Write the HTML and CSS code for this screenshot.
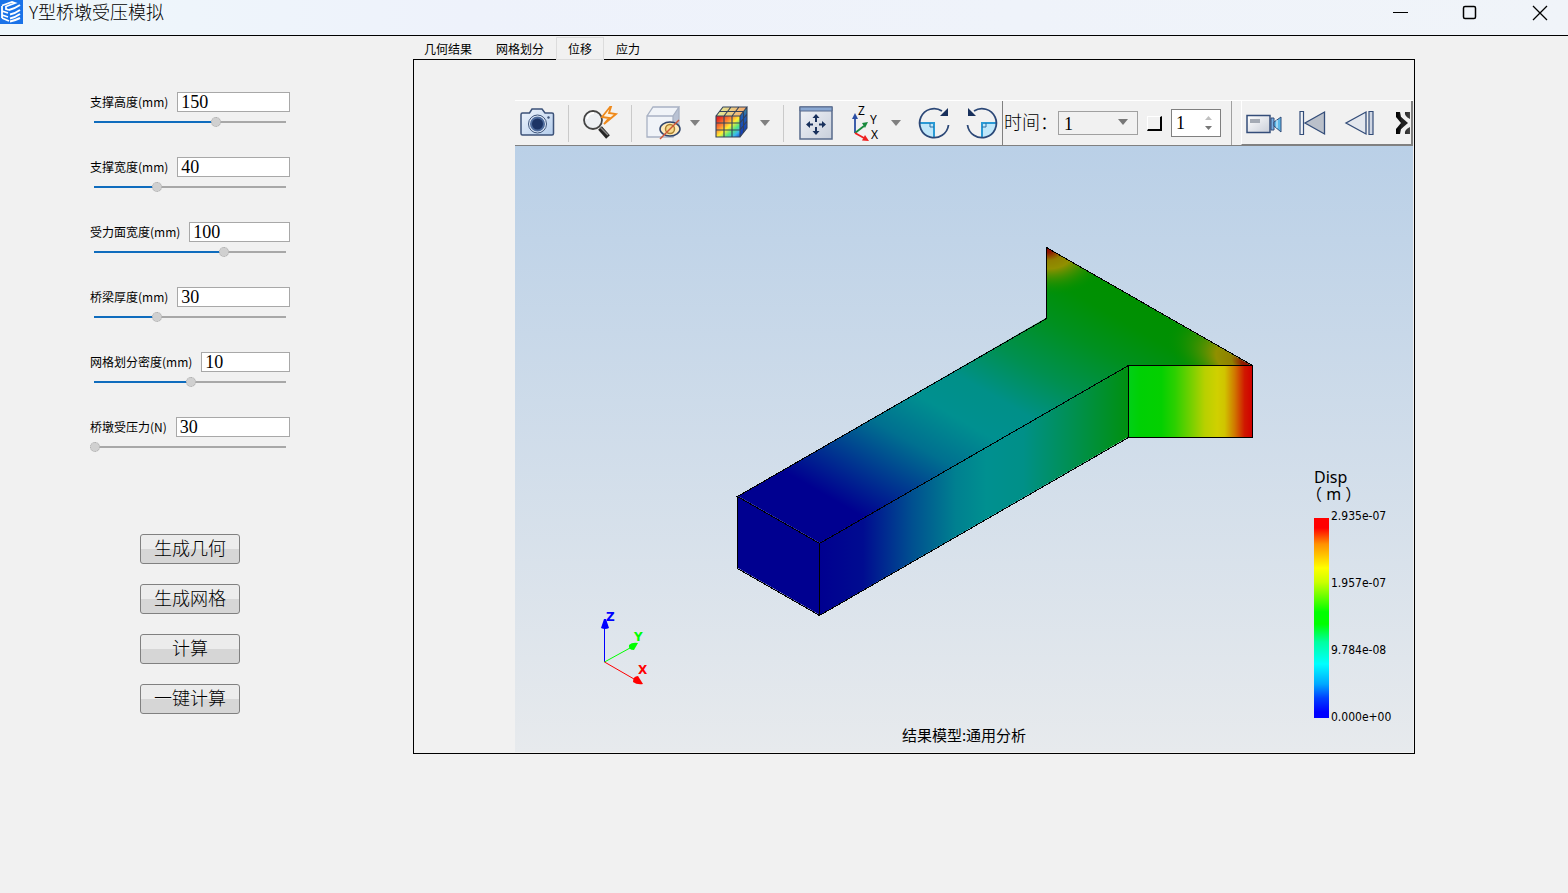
FILE: index.html
```html
<!DOCTYPE html>
<html lang="zh-CN">
<head>
<meta charset="utf-8">
<title>Y型桥墩受压模拟</title>
<link rel="stylesheet" href="styles.css">
</head>
<body>
<header class="titlebar">
  <svg class="app-logo" viewBox="0 0 23 24" aria-hidden="true">
    <rect width="23" height="24" fill="#1a73e8"/>
    <path d="M2 5.500 12 2l3 1-9 3.500v2.500l3 1M2 6v12M2 11l6 2M2 15l6 2M2 18l7 3" stroke="#fff" stroke-width="1.800" fill="none"/>
    <path d="M9 10q5-1 11-5M10 14.500q5-1 10-4.500M10 18.500q5-1 10-4.500M10 21.500q5-1 10-3.500" stroke="#fff" stroke-width="2" fill="none"/>
  </svg>
  <h1 class="app-title">Y型桥墩受压模拟</h1>
  <div class="window-controls">
    <button type="button" aria-label="最小化"><svg viewBox="0 0 16 16"><path d="M1 7.500h15" /></svg></button>
    <button type="button" aria-label="最大化"><svg viewBox="0 0 16 16"><rect class="thick" x="1.500" y="1.500" width="12" height="12" rx="1.500"/></svg></button>
    <button type="button" aria-label="关闭"><svg viewBox="0 0 16 16"><path class="cross" d="M1 1l14 14M15 1 1 15"/></svg></button>
  </div>
</header>

<main class="workspace">
  <form class="params">
    <div class="param">
      <div class="param-row"><label for="p1">支撑高度(mm)</label><input id="p1" class="param-value" type="text" value="150"></div>
      <input class="slider" type="range" aria-label="支撑高度" min="0" max="1000" value="637" style="--fill:63.7%">
    </div>
    <div class="param">
      <div class="param-row"><label for="p2">支撑宽度(mm)</label><input id="p2" class="param-value" type="text" value="40"></div>
      <input class="slider" type="range" aria-label="支撑宽度" min="0" max="1000" value="326" style="--fill:32.6%">
    </div>
    <div class="param">
      <div class="param-row"><label for="p3">受力面宽度(mm)</label><input id="p3" class="param-value" type="text" value="100"></div>
      <input class="slider" type="range" aria-label="受力面宽度" min="0" max="1000" value="679" style="--fill:67.9%">
    </div>
    <div class="param">
      <div class="param-row"><label for="p4">桥梁厚度(mm)</label><input id="p4" class="param-value" type="text" value="30"></div>
      <input class="slider" type="range" aria-label="桥梁厚度" min="0" max="1000" value="326" style="--fill:32.6%">
    </div>
    <div class="param">
      <div class="param-row"><label for="p5">网格划分密度(mm)</label><input id="p5" class="param-value" type="text" value="10"></div>
      <input class="slider" type="range" aria-label="网格划分密度" min="0" max="1000" value="505" style="--fill:50.5%">
    </div>
    <div class="param">
      <div class="param-row"><label for="p6">桥墩受压力(N)</label><input id="p6" class="param-value" type="text" value="30"></div>
      <input class="slider" type="range" aria-label="桥墩受压力" min="0" max="1000" value="0" style="--fill:0%">
    </div>
    <div class="actions">
      <button type="button">生成几何</button>
      <button type="button">生成网格</button>
      <button type="button">计算</button>
      <button type="button">一键计算</button>
    </div>
  </form>

  <section class="results">
    <div class="tabs" role="tablist">
      <button type="button" role="tab">几何结果</button>
      <button type="button" role="tab">网格划分</button>
      <button type="button" role="tab" class="selected" aria-selected="true">位移</button>
      <button type="button" role="tab">应力</button>
    </div>
    <div class="frame">
      <div class="viewer">
        <div class="toolbar">
          <div class="tools">
            <button type="button" class="tool" aria-label="截图"><svg viewBox="0 0 36 36">
              <defs><linearGradient id="cam" x2="1" y2="1"><stop stop-color="#f0f5fc"/><stop offset="1" stop-color="#b4cdec"/></linearGradient></defs>
              <path d="M3.500 8h7l2.500-4h10l3 4h7q1.500 0 1.500 1.500v19q0 1.500-1.500 1.500h-29.500q-1.500 0-1.500-1.500v-19Q2 8 3.500 8z" fill="url(#cam)" stroke="#3c5278" stroke-width="1.500"/>
              <circle cx="18.500" cy="19" r="9" fill="#dfeafa" stroke="#3c5278"/><circle cx="18.500" cy="19" r="6.500" fill="#1c3465" stroke="#4d6b9c" stroke-width="2"/>
              <circle cx="29.500" cy="12.500" r="1.200" fill="#3c5278"/>
            </svg></button>
            <i class="sep"></i>
            <button type="button" class="tool" aria-label="快速缩放"><svg viewBox="0 0 36 36">
              <path d="M18 23l8 9" stroke="#262626" stroke-width="5"/><path d="M18 22l8 8" stroke="#888" stroke-width="1.500"/>
              <circle cx="11" cy="15" r="9" fill="#eceff3" stroke="#444" stroke-width="1.800"/><path d="M5 14q1-6 7-6" fill="none" stroke="#fff" stroke-width="2"/>
              <path d="M28 2 20 12l7 1-5 6 12-10-7-1 2-6z" fill="#fff3df" stroke="#ef8a1c" stroke-width="1.800"/>
            </svg></button>
            <i class="sep"></i>
            <button type="button" class="tool" aria-label="显示隐藏"><svg viewBox="0 0 36 36">
              <path d="M2 11 8 2h26l-6 9v21H2z" fill="#f0f3f8"/><path d="M28 11 34 2v19l-6 9z" fill="#b9c2d4"/>
              <path d="M2 11h26v21H2zM2 11 8 2h26L28 11M34 2v21l-6 9" fill="none" stroke="#a8b1c3" stroke-width="1.300"/>
              <ellipse cx="25" cy="24" rx="10" ry="7" fill="#ffe9b8" stroke="#30456b" stroke-width="1.500"/><circle cx="25" cy="24" r="4.500" fill="#f7d98c" stroke="#a98131" stroke-width="1.500"/>
              <path d="M34 15 15 34" stroke="#cf5536" stroke-width="1.500"/>
            </svg></button>
            <button type="button" class="drop" aria-label="显示选项"></button>
            <button type="button" class="tool after-drop" aria-label="云图"><svg viewBox="0 0 36 36">
              <defs><linearGradient id="cf" x2="1" y2="1"><stop offset=".1" stop-color="#e52620"/><stop offset=".35" stop-color="#ff8a35"/><stop offset=".52" stop-color="#ffef32"/><stop offset=".7" stop-color="#54e685"/><stop offset=".85" stop-color="#3bb6ee"/><stop offset="1" stop-color="#1d4fd0"/></linearGradient>
              <linearGradient id="ct"><stop stop-color="#dff09a"/><stop offset="1" stop-color="#f6a56a"/></linearGradient>
              <linearGradient id="cs" x2="0" y2="1"><stop stop-color="#4f9a90"/><stop offset=".3" stop-color="#2060b8"/><stop offset="1" stop-color="#1238b8"/></linearGradient></defs>
              <path d="M1 11h24v21H1z" fill="url(#cf)"/><path d="M1 11 8 2h24l-7 9z" fill="url(#ct)"/><path d="M25 11l7-9v21l-7 9z" fill="url(#cs)"/>
              <path d="M1 11h24v21H1zM1 11 8 2h24l-7 9M32 2v21l-7 9M9 11v21M17 11v21M1 18h24l7-9M1 25h24l7-9M9 11l7-9M17 11l7-9M4.500 6.500h24v21" fill="none" stroke="#33425b" stroke-width="1.100"/>
            </svg></button>
            <button type="button" class="drop" aria-label="云图选项"></button>
            <i class="sep"></i>
            <button type="button" class="tool" aria-label="适应窗口"><svg viewBox="0 0 36 36">
              <defs><linearGradient id="win" x2="1" y2="1"><stop stop-color="#f2f4f8"/><stop offset="1" stop-color="#c8cfdb"/></linearGradient></defs>
              <path d="M3 2h32v32H3z" fill="url(#win)" stroke="#586b8c" stroke-width="1.500"/><path d="M3 2h32v4H3z" fill="#8aa8d2" stroke="#586b8c"/>
              <path d="M19 12v5M19 22v5M11 19.500h5M22 19.500h5" stroke="#18305c" stroke-width="2"/>
              <path d="M15.500 13l3.500-4 3.500 4zM15.500 26l3.500 4 3.500-4zM13 16l-4 3.500 4 3.500zM25 16l4 3.500-4 3.500z" fill="#18305c"/>
            </svg></button>
            <button type="button" class="tool after-drop" aria-label="视角"><svg viewBox="0 0 36 36">
              <path d="M7 28V13" stroke="#2b4ea3" stroke-width="1.800"/><path d="M4 14l3-6 3 6z" fill="#2b4ea3"/>
              <path d="M7 28l9-7" stroke="#188a3c" stroke-width="1.800"/><path d="M14 18l6-1-3 6z" fill="#188a3c"/>
              <path d="M7 28l9 5" stroke="#ee2020" stroke-width="1.800"/><path d="M17 30l4 6-7-.500z" fill="#ee2020"/>
              <g class="axis-icon-text"><text x="10" y="10">Z</text><text x="22" y="19">Y</text><text x="23" y="34">X</text></g>
            </svg></button>
            <button type="button" class="drop near" aria-label="视角选项"></button>
            <button type="button" class="tool after-drop" aria-label="顺时针旋转"><svg viewBox="0 0 36 36">
              <path d="M3 18h15v15Q4 33 3 18z" fill="#bfe7fa"/><path d="M3 18h15v15" fill="none" stroke="#2a9ad5" stroke-width="2"/><path d="M14 18v4h4" fill="none" stroke="#2a6ea5"/>
              <path d="M26 6A14.500 14.500 0 1 0 32.500 20" fill="none" stroke="#2c4877" stroke-width="1.800"/><path d="M24 11h8V3z" fill="#18305c"/>
            </svg></button>
            <button type="button" class="tool next" aria-label="逆时针旋转"><svg viewBox="0 0 36 36">
              <path d="M33 18H18v15Q32 33 33 18z" fill="#bfe7fa"/><path d="M33 18H18v15" fill="none" stroke="#2a9ad5" stroke-width="2"/><path d="M22 18v4h-4" fill="none" stroke="#2a6ea5"/>
              <path d="M10 6A14.500 14.500 0 1 1 3.500 20" fill="none" stroke="#2c4877" stroke-width="1.800"/><path d="M12 11H4V3z" fill="#18305c"/>
            </svg></button>
          </div>
          <div class="time">
            <label for="time">时间：</label>
            <span class="select-wrap"><select id="time"><option>1</option></select></span>
            <input class="lock" type="checkbox" aria-label="锁定">
            <span class="spin"><input type="text" value="1" aria-label="步长"><span class="spin-buttons"><button type="button" aria-label="增加"></button><button type="button" aria-label="减少"></button></span></span>
          </div>
          <div class="playback">
            <button type="button" class="tool" aria-label="录制"><svg viewBox="0 0 36 36">
              <defs><linearGradient id="rec" x2="1" y2="1"><stop stop-color="#fff"/><stop offset="1" stop-color="#c9ced8"/></linearGradient></defs>
              <path d="M1 10.500h23v17H1z" fill="url(#rec)" stroke="#344d79" stroke-width="1.500"/><rect x="4" y="14" width="10" height="4" fill="#a4aab4"/>
              <path d="M25 13h3v12h-3z" fill="#78aee0" stroke="#344d79"/><path d="M28 17l7-5v15l-7-6z" fill="#5cb8e8" stroke="#344d79"/><path d="M31 15v8" stroke="#eaf7ff"/>
            </svg></button>
            <button type="button" class="tool" aria-label="首帧"><svg viewBox="0 0 36 36">
              <path d="M6 6.500h3.500v23H6z" fill="#f2f4f8" stroke="#344d79" stroke-width="1.200"/><path d="M30.500 7v22L11 18z" fill="#bac0ca" stroke="#344d79" stroke-width="1.300"/>
            </svg></button>
            <button type="button" class="tool" aria-label="上一帧"><svg viewBox="0 0 36 36">
              <path d="M24 7v22L4 18z" fill="#e3e7ee" stroke="#344d79" stroke-width="1.300"/><path d="M27 6.500h4v23h-4z" fill="#cfd6e3" stroke="#344d79" stroke-width="1.200"/>
            </svg></button>
            <button type="button" class="tool more" aria-label="更多"><svg viewBox="0 0 14 22">
              <defs><linearGradient id="mr"><stop stop-color="#000"/><stop offset="1" stop-color="#444"/></linearGradient></defs>
              <path d="M0 0h14v22H0z" fill="url(#mr)"/><path d="M4 0h5q-1 4 5 7v8q-6 3-5 7H4l1-5 5-6-5-6z" fill="#f1f1f1"/><path d="M0 5l5 6-5 6z" fill="#f1f1f1"/><path d="M5 5l7 6-7 6z" fill="#222"/>
            </svg></button>
          </div>
        </div>

        <div class="canvas">
          <svg class="scene" viewBox="515 146 898 606" role="img" aria-label="位移云图">
            <defs>
              <linearGradient id="top" gradientUnits="userSpaceOnUse" x1="738" y1="496" x2="922" y2="176">
                <stop offset="0" stop-color="#000090"/><stop offset=".12" stop-color="#000090"/><stop offset=".24" stop-color="#003890"/><stop offset=".36" stop-color="#007090"/><stop offset=".48" stop-color="#009090"/><stop offset=".58" stop-color="#009088"/><stop offset=".7" stop-color="#009050"/><stop offset=".83" stop-color="#009020"/><stop offset=".93" stop-color="#009004"/><stop offset="1" stop-color="#009000"/>
              </linearGradient>
              <linearGradient id="side">
                <stop offset="0" stop-color="#000090"/><stop offset=".14" stop-color="#000c90"/><stop offset=".3" stop-color="#005090"/><stop offset=".44" stop-color="#008090"/><stop offset=".54" stop-color="#009090"/><stop offset=".66" stop-color="#009088"/><stop offset=".8" stop-color="#009058"/><stop offset="1" stop-color="#009010"/>
              </linearGradient>
              <linearGradient id="end">
                <stop offset="0" stop-color="#00d018"/><stop offset=".1" stop-color="#00d004"/><stop offset=".27" stop-color="#04d000"/><stop offset=".38" stop-color="#2cd000"/><stop offset=".5" stop-color="#70d000"/><stop offset=".62" stop-color="#b8d000"/><stop offset=".72" stop-color="#d0d000"/><stop offset=".78" stop-color="#d0c400"/><stop offset=".86" stop-color="#d07800"/><stop offset=".94" stop-color="#d01800"/><stop offset="1" stop-color="#d00000"/>
              </linearGradient>
              <radialGradient id="hotA" gradientUnits="userSpaceOnUse" cx="0" cy="0" r="1" gradientTransform="translate(1046 247) rotate(10) scale(64 48)">
                <stop offset="0" stop-color="#900000"/><stop offset=".12" stop-color="#901800"/><stop offset=".28" stop-color="#908000"/><stop offset=".45" stop-color="#909000"/><stop offset="1" stop-color="#009000" stop-opacity="0"/>
              </radialGradient>
              <radialGradient id="hotB" gradientUnits="userSpaceOnUse" cx="0" cy="0" r="1" gradientTransform="translate(1252 366) rotate(24) scale(92 44)">
                <stop offset="0" stop-color="#900000"/><stop offset=".12" stop-color="#902000"/><stop offset=".24" stop-color="#908000"/><stop offset=".42" stop-color="#909000"/><stop offset="1" stop-color="#009000" stop-opacity="0"/>
              </radialGradient>
            </defs>
            <path d="M738 496 1046 318V247L1252 366H1128L820 543z" fill="url(#top)"/>
            <path d="M1046 318V247L1149 306z" fill="url(#hotA)"/>
            <path d="M1149 306 1252 366H1128z" fill="url(#hotB)"/>
            <path d="M820 543 1128 366v71L820 615z" fill="url(#side)"/>
            <path d="M738 496 820 543v72L738 568z" fill="#000090"/>
            <path d="M1128 366h124v71H1128z" fill="url(#end)"/>
            <path class="edges" d="M737.500 496.500 1046.500 318.500V247.500L1252.500 365.500H1128.500L819.500 543.500zV568.500L819.500 615.500V543.500M819.500 615.500 1128.500 437.500V365.500M1128.500 437.500H1252.500V365.500"/>
            <path d="M604.500 662V627" stroke="#00f"/><path d="M601 628l3-9h2l3 9q-4 2-8 0z" fill="#00f"/>
            <path d="M604.500 662 630 648" stroke="#0f0"/><path d="M629 645q3-3 9-2l-4 7q-6 0-5-5z" fill="#0f0"/>
            <path d="M604.500 662 634 679" stroke="red"/><path d="M633 682q0-6 5-6l5 8q-6 1-10-2z" fill="red"/>
            <g class="triad"><text x="606" y="621" fill="#00f">Z</text><text x="634" y="641" fill="#0f0">Y</text><text x="638" y="674" fill="red">X</text></g>
          </svg>
          <div class="legend">
            <div class="legend-title"><div>Disp</div><div class="unit">（ m ）</div></div>
            <div class="legend-body">
              <div class="legend-bar"></div>
              <div class="legend-labels"><span>2.935e-07</span><span>1.957e-07</span><span>9.784e-08</span><span>0.000e+00</span></div>
            </div>
          </div>
          <div class="caption">结果模型:通用分析</div>
        </div>
      </div>
    </div>
  </section>
</main>
</body>
</html>
```
FILE: styles.css
```css
* { box-sizing: border-box; }
body {
  margin: 0;
  min-height: 100vh;
  background: #f1f1f1;
  color: #000;
  font: 12px/16px "Noto Sans CJK SC", sans-serif;
}
button, input, select { font: inherit; color: inherit; margin: 0; padding: 0; border: 0; border-radius: 0; background: none; }
svg { display: block; }

.titlebar {
  display: flex;
  align-items: flex-start;
  height: 36px;
  border-bottom: 1px solid #000;
  background: linear-gradient(90deg, #eef7fb, #eef2fb 30%, #f0f4f9);
}
.app-logo { width: 23px; height: 24px; }
.app-title { flex: 1; margin: 0 0 0 6px; font-size: 18px; line-height: 23px; font-weight: 300; }
.window-controls { display: flex; gap: 14px; }
.window-controls button { display: grid; place-items: center; width: 56px; height: 26px; }
.window-controls svg { width: 16px; height: 16px; fill: none; stroke: #000; stroke-width: 1; }
.window-controls .thick { stroke-width: 1.5; }
.window-controls .cross { stroke-width: 1.3; }

.workspace { display: flex; align-items: flex-start; }
.params { flex: none; width: 413px; padding: 56px 123px 0 90px; }
.param { height: 65px; }
.param-row { display: flex; align-items: center; gap: 9px; height: 20px; }
.param-value {
  flex: 1;
  min-width: 0;
  height: 20px;
  padding: 0 3px;
  border: 1px solid #a8a8a8;
  background: #fff;
  font: 18px/18px "Liberation Serif", serif;
}
.slider {
  display: block;
  appearance: none;
  width: 100%;
  height: 10px;
  margin-top: 5px;
  background: linear-gradient(90deg, #0f6cbd var(--fill), #a8a8a8 var(--fill)) center / calc(100% - 8px) 2px no-repeat;
}
.slider::-webkit-slider-thumb { appearance: none; width: 10px; height: 10px; border: 1px dotted #aaa; border-radius: 50%; background: #d0d0d0; }
.actions { display: flex; flex-direction: column; gap: 20px; width: 100px; margin: 52px auto 0; }
.actions button {
  height: 30px;
  padding-bottom: 4px;
  border: 1px solid #808080;
  border-radius: 3px;
  background: linear-gradient(#ececec 50%, #d6d6d6 50%);
  font: 300 18px/24px "Noto Sans CJK SC", sans-serif;
}

.results { flex: 1; min-width: 0; margin: 1px 153px 0 0; }
.tabs { position: relative; display: flex; height: 23px; }
.tabs button { height: 23px; padding: 0 11px; border: 1px solid transparent; }
.tabs button:first-child { padding-left: 10px; }
.tabs .selected { border-color: #dcdcdc; background: #f1f1f1; }
.frame { margin-top: -1px; padding: 40px 1px 1px 101px; border: 1px solid #000; }

.toolbar { display: flex; height: 46px; border-top: 1px solid #fff; border-bottom: 1px solid #808080; overflow: hidden; }
.tools { display: flex; align-items: center; flex: none; width: 488px; padding-left: 4px; border-right: 1px solid #808080; }
.tool { flex: none; width: 36px; height: 36px; }
.tool svg { width: 36px; height: 36px; overflow: visible; }
.tool.after-drop { margin-left: 15px; }
.tool.next { margin-left: 12px; }
.sep { flex: none; width: 1px; height: 37px; margin: 0 13px; background: #cacaca; }
.drop { flex: none; width: 10px; height: 6px; margin-left: 9px; background: #808080; clip-path: polygon(0 0, 100% 0, 50% 100%); }
.drop.near { margin-left: 7px; }
.axis-icon-text { font: 12px "Noto Sans", sans-serif; }
.time { display: flex; align-items: center; flex: none; width: 229px; padding-left: 1px; border-right: 1px solid #a0a0a0; font: 300 18px/24px "Liberation Serif", "Noto Sans CJK SC", serif; }
.select-wrap { position: relative; width: 80px; height: 24px; }
.select-wrap::after { content: ""; position: absolute; right: 10px; top: 8px; width: 10px; height: 6px; background: #777; clip-path: polygon(0 0, 100% 0, 50% 100%); pointer-events: none; }
.select-wrap select { appearance: none; display: block; width: 80px; height: 24px; padding-left: 5px; border: 1px solid #a0a0a0; }
.lock { appearance: none; width: 15px; height: 15px; margin-left: 9px; border: solid; border-width: 1px 2px 2px 1px; border-color: #fff #000 #000 #fff; }
.spin { display: flex; width: 50px; height: 28px; margin-left: 9px; border: 1px solid #808080; background: #fff; }
.spin input { flex: 1; min-width: 0; padding-left: 4px; }
.spin-buttons { display: flex; flex-direction: column; justify-content: center; gap: 6px; width: 15px; }
.spin-buttons button { width: 7px; height: 4px; background: #c0c0c0; clip-path: polygon(50% 0, 100% 100%, 0 100%); }
.spin-buttons button + button { background: #777; clip-path: polygon(0 0, 100% 0, 50% 100%); }
.playback {
  display: flex;
  align-items: center;
  flex: 1;
  gap: 12px;
  min-width: 0;
  margin-left: 9px;
  padding-left: 4px;
  border-left: 1px solid #fff;
  border-right: 2px solid #808080;
  border-bottom: 1px solid #808080;
  overflow: hidden;
}
.tool.more, .tool.more svg { width: 14px; height: 22px; }
.tool.more { margin-left: 6px; }

.canvas { position: relative; background: linear-gradient(#bad0e7, #e7eaed); }
.scene { width: 100%; height: auto; }
.edges { fill: none; stroke: #000; stroke-width: 1; shape-rendering: crispEdges; }
.triad { font: bold 12px "DejaVu Sans", sans-serif; }
.legend { position: absolute; right: 20px; bottom: 29px; width: 79px; }
.legend-title { margin-bottom: 15px; font: 16px/17px "Noto Sans", "Noto Sans CJK SC", sans-serif; white-space: nowrap; }
.legend-title .unit { margin-left: -8px; }
.legend-body { display: flex; align-items: flex-end; gap: 2px; }
.legend-bar { width: 15px; height: 200px; margin-bottom: 5px; background: linear-gradient(#f00, #f00 5%, #ff9000 13%, #ff0 25%, #cf0 32%, #0f0 47%, #0f0 53%, #00ffa0 62%, #0ff 73%, #00a8ff 83%, #0040ff 90%, #00f 97%); }
.legend-labels { display: flex; flex-direction: column; justify-content: space-between; height: 213px; margin-top: -8px; font: 12px/12px "DejaVu Sans Condensed", "Noto Sans", sans-serif; }
.caption { position: absolute; left: 0; right: 0; bottom: 6px; text-align: center; font-size: 15px; line-height: 22px; }
```
